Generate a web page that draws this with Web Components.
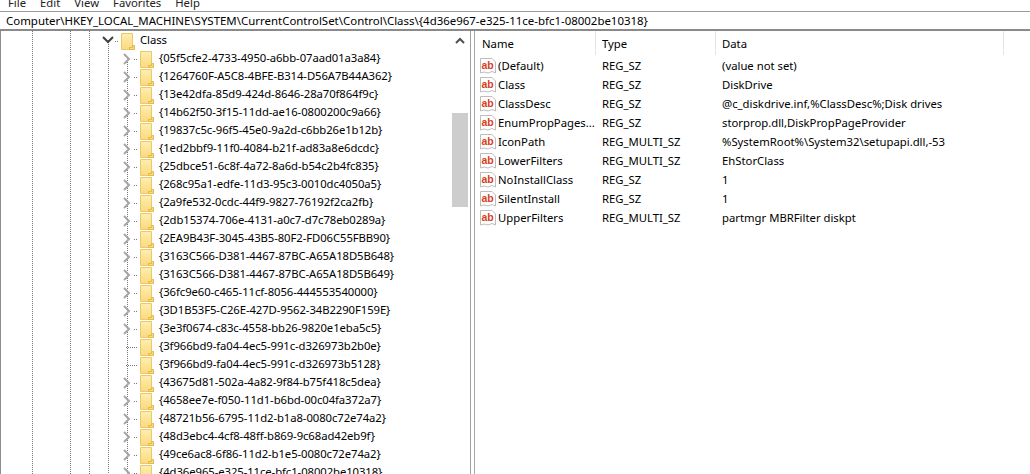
<!DOCTYPE html>
<html>
<head>
<meta charset="utf-8">
<title>Registry Editor</title>
<style>
    html, body {
        margin: 0;
        width: 1030px;
        height: 474px;
        overflow: hidden;
        background: #fff;
        color: #000;
        font: 11.3px/16px "Noto Sans", sans-serif;
    }
</style>
</head>
<body>
<reg-editor path="Computer\HKEY_LOCAL_MACHINE\SYSTEM\CurrentControlSet\Control\Class\{4d36e967-e325-11ce-bfc1-08002be10318}"></reg-editor>

<script>
const TREE_KEYS = [
    '{05f5cfe2-4733-4950-a6bb-07aad01a3a84}', '{1264760F-A5C8-4BFE-B314-D56A7B44A362}',
    '{13e42dfa-85d9-424d-8646-28a70f864f9c}', '{14b62f50-3f15-11dd-ae16-0800200c9a66}',
    '{19837c5c-96f5-45e0-9a2d-c6bb26e1b12b}', '{1ed2bbf9-11f0-4084-b21f-ad83a8e6dcdc}',
    '{25dbce51-6c8f-4a72-8a6d-b54c2b4fc835}', '{268c95a1-edfe-11d3-95c3-0010dc4050a5}',
    '{2a9fe532-0cdc-44f9-9827-76192f2ca2fb}', '{2db15374-706e-4131-a0c7-d7c78eb0289a}',
    '{2EA9B43F-3045-43B5-80F2-FD06C55FBB90}', '{3163C566-D381-4467-87BC-A65A18D5B648}',
    '{3163C566-D381-4467-87BC-A65A18D5B649}', '{36fc9e60-c465-11cf-8056-444553540000}',
    '{3D1B53F5-C26E-427D-9562-34B2290F159E}', '{3e3f0674-c83c-4558-bb26-9820e1eba5c5}',
    '-{3f966bd9-fa04-4ec5-991c-d326973b2b0e}', '-{3f966bd9-fa04-4ec5-991c-d326973b5128}',
    '{43675d81-502a-4a82-9f84-b75f418c5dea}', '{4658ee7e-f050-11d1-b6bd-00c04fa372a7}',
    '{48721b56-6795-11d2-b1a8-0080c72e74a2}', '{48d3ebc4-4cf8-48ff-b869-9c68ad42eb9f}',
    '{49ce6ac8-6f86-11d2-b1e5-0080c72e74a2}', '{4d36e965-e325-11ce-bfc1-08002be10318}',
]

const VALUES = [
    ['(Default)', 'REG_SZ', '(value not set)'],
    ['Class', 'REG_SZ', 'DiskDrive'],
    ['ClassDesc', 'REG_SZ', '@c_diskdrive.inf,%ClassDesc%;Disk drives'],
    ['EnumPropPages...', 'REG_SZ', 'storprop.dll,DiskPropPageProvider'],
    ['IconPath', 'REG_MULTI_SZ', '%SystemRoot%\\System32\\setupapi.dll,-53'],
    ['LowerFilters', 'REG_MULTI_SZ', 'EhStorClass'],
    ['NoInstallClass', 'REG_SZ', '1'],
    ['SilentInstall', 'REG_SZ', '1'],
    ['UpperFilters', 'REG_MULTI_SZ', 'partmgr MBRFilter diskpt'],
]

class menuBar extends HTMLElement {
    connectedCallback() {
        const shadow = this.attachShadow({ mode: 'open' })
        shadow.innerHTML = `
        <style>
            :host {
                display: flex;
                height: 11px;
                overflow: hidden;
                align-items: flex-end;
                gap: 14px;
                padding-left: 8px;
            }
            span { display: block; height: 16px; color: #222; }
        </style>
        <span>File</span><span>Edit</span><span>View</span><span>Favorites</span><span>Help</span>
        `
    }
}

class addressBar extends HTMLElement {
    connectedCallback() {
        const shadow = this.attachShadow({ mode: 'open' })
        shadow.innerHTML = `
        <style>
            :host {
                display: flex;
                align-items: center;
                box-sizing: border-box;
                height: 20px;
                padding-left: 6px;
                font-size: 11.45px;
                white-space: nowrap;
                border-top: 1px solid #9c9c9c;
                border-bottom: 2px solid #8a8a8a;
            }
        </style>
        <slot></slot>
        `
    }
}

class treeRow extends HTMLElement {
    connectedCallback() {
        const level = this.getAttribute('level') || '1'
        const mode = this.getAttribute('mode') || 'closed'
        let glyph = '<path d="M3 2 L8 7 L3 12" fill="none" stroke="#a6a6a6" stroke-width="2"/>'
        if (mode === 'open') glyph = '<path d="M1 3 L6 8 L11 3" fill="none" stroke="#404040" stroke-width="2"/>'
        if (mode === 'leaf') glyph = ''

        const shadow = this.attachShadow({ mode: 'open' })
        shadow.innerHTML = `
        <style>
            :host {
                display: flex;
                align-items: center;
                height: 18px;
                white-space: nowrap;
                letter-spacing: -0.08px;
                padding-left: ${level === '0' ? 101 : 120}px;
            }
            .toggle { width: 12px; height: 14px; flex: none; }
            .dots {
                width: ${mode === 'leaf' ? 12 : 4}px;
                margin-left: 1px;
                margin-right: 2px;
                height: 1px;
                flex: none;
                background: repeating-linear-gradient(90deg, #777 0 1px, transparent 1px 2px);
            }
            .dots.leaf { margin-left: -7px; margin-right: 2px; }
            .folder { width: 14px; height: 17px; flex: none; margin-right: 5px; }
            .label { margin-bottom: 2px; }
        </style>
        <svg class="toggle" viewBox="0 0 12 14">${glyph}</svg>
        <div class="dots ${mode === 'leaf' ? 'leaf' : ''}"></div>
        <svg class="folder" viewBox="0 0 14 17">
            <defs><linearGradient id="f" x1="0" y1="0" x2="0" y2="1">
                <stop offset="0" stop-color="#fdeeb0"/><stop offset="1" stop-color="#fbd97e"/>
            </linearGradient></defs>
            <path d="M0.5 0.5 H11.5 V16.5 H0.5 Z" fill="url(#f)" stroke="#ecc968"/>
            <path d="M11.5 12.5 H13.5 V16.5 H8.5 V14.5 H11.5 Z" fill="#fbd97e" stroke="#e3b94f"/>
        </svg>
        <span class="label"><slot></slot></span>
        `
    }
}

class keyTree extends HTMLElement {
    connectedCallback() {
        const shadow = this.attachShadow({ mode: 'open' })
        shadow.innerHTML = `
        <style>
            :host {
                display: block;
                overflow: hidden;
                flex: none;
                width: 451px;
                padding-top: 1px;
                border-left: 1px solid #8c8c94;
                --dot: repeating-linear-gradient(180deg, #777 0 1px, transparent 1px 2px);
                background-image: var(--dot), var(--dot), var(--dot), var(--dot), var(--dot);
                background-repeat: no-repeat;
                background-size: 1px 100%, 1px 100%, 1px 100%, 1px calc(100% - 9px), 1px calc(100% - 27px);
                background-position: 31px 0, 69px 0, 88px 0, 107px 9px, 126px 27px;
            }
        </style>
        <slot></slot>
        `
        this.innerHTML = `<tree-row level="0" mode="open">Class</tree-row>` + TREE_KEYS.map((k) => {
            const leaf = k.startsWith('-')
            return `<tree-row mode="${leaf ? 'leaf' : 'closed'}">${leaf ? k.slice(1) : k}</tree-row>`
        }).join('')
    }
}

class scrollBar extends HTMLElement {
    connectedCallback() {
        const shadow = this.attachShadow({ mode: 'open' })
        shadow.innerHTML = `
        <style>
            :host {
                display: flex;
                flex-direction: column;
                align-items: center;
                flex: none;
                width: 16px;
                margin-right: 2px;
            }
            svg { margin-top: 6px; width: 10px; height: 7px; }
            .thumb { width: 100%; height: 94px; margin-top: 69px; background: #cdcdcd; }
        </style>
        <svg viewBox="0 0 10 7"><path d="M1 6 L5 2 L9 6" fill="none" stroke="#505050" stroke-width="2"/></svg>
        <div class="thumb"></div>
        `
    }
}

class valueRow extends HTMLElement {
    connectedCallback() {
        const shadow = this.attachShadow({ mode: 'open' })
        shadow.innerHTML = `
        <style>
            :host {
                display: grid;
                grid-template-columns: 131px 120px 1fr;
                align-items: center;
                height: 19px;
                white-space: nowrap;
            }
            .name { display: flex; align-items: center; gap: 2px; padding-left: 9px; }
            svg { width: 16px; height: 16px; flex: none; }
            text { font: bold 10.5px "Liberation Sans", sans-serif; fill: #d8401c; }
        </style>
        <div class="name">
            <svg viewBox="0 0 16 16">
                <path d="M0.5 0.5 H12 L15.5 4 V15 L12 13.5 L8 15 L4 14 L0.5 15 Z" fill="#fff" stroke="#bdbdbd"/>
                <text x="1.5" y="10.5">ab</text>
            </svg>
            <span>${this.getAttribute('name')}</span>
        </div>
        <div>${this.getAttribute('type')}</div>
        <div>${this.getAttribute('data')}</div>
        `
    }
}

class valueList extends HTMLElement {
    connectedCallback() {
        const shadow = this.attachShadow({ mode: 'open' })
        shadow.innerHTML = `
        <style>
            :host {
                display: block;
                flex: 1;
                min-width: 0;
                border-left: 1px solid #a0a0a0;
                box-shadow: inset 3px 0 0 #fff, inset 4px 0 0 #a8a8a8;
            }
            header {
                display: grid;
                grid-template-columns: 121px 120px 288px;
                height: 24px;
                margin-left: 4px;
                margin-bottom: 1px;
            }
            header div {
                display: flex;
                align-items: center;
                padding: 2px 0 0 6px;
                border-right: 1px solid #e5e5e5;
                box-sizing: border-box;
            }
            header div:first-child { padding-left: 7px; }
            .rows { display: block; }
        </style>
        <header><div>Name</div><div>Type</div><div>Data</div></header>
        <div class="rows">
            ${VALUES.map((v) => `<value-row name="${v[0]}" type="${v[1]}" data="${v[2]}"></value-row>`).join('')}
        </div>
        `
    }
}

class regEditor extends HTMLElement {
    connectedCallback() {
        const shadow = this.attachShadow({ mode: 'open' })
        shadow.innerHTML = `
        <style>
            :host { display: flex; flex-direction: column; height: 474px; }
            main { display: flex; flex: 1; min-height: 0; }
        </style>
        <menu-bar></menu-bar>
        <address-bar>${this.getAttribute('path')}</address-bar>
        <main>
            <key-tree></key-tree>
            <scroll-bar></scroll-bar>
            <value-list></value-list>
        </main>
        `
    }
}

customElements.define('menu-bar', menuBar)
customElements.define('address-bar', addressBar)
customElements.define('tree-row', treeRow)
customElements.define('key-tree', keyTree)
customElements.define('scroll-bar', scrollBar)
customElements.define('value-row', valueRow)
customElements.define('value-list', valueList)
customElements.define('reg-editor', regEditor)
</script>
</body>
</html>
